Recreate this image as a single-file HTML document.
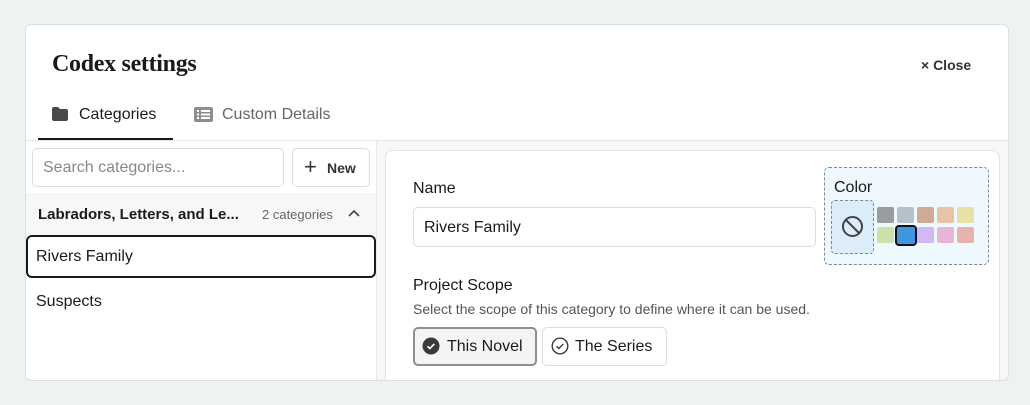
<!DOCTYPE html>
<html><head><style>
*{box-sizing:border-box;margin:0;padding:0}
body{width:1030px;height:405px;background:#eef3f2;font-family:"Liberation Sans",sans-serif;color:#1a1a1a;position:relative;overflow:hidden}
.a{position:absolute}
.card{left:25px;top:24px;width:984px;height:357px;background:#fff;border:1px solid #dcdfe0;border-radius:6px;overflow:hidden}
.in{position:absolute;left:-1px;top:-1px;width:984px;height:357px}
.t{font-size:15px;white-space:nowrap}
.sw{position:absolute;width:17px;height:16px;border-radius:2px}
</style></head><body>
<div class="a card"><div class="in">
  <div class="a" style="left:27px;top:27px;font-family:'Liberation Serif',serif;font-weight:bold;font-size:24px;letter-spacing:-0.3px">Codex settings</div>
  <div class="a t" style="left:896px;top:33px;font-size:14px;color:#333;font-weight:bold">× Close</div>
  <svg class="a" style="left:26px;top:82px" width="18" height="16" viewBox="0 0 18 16"><path d="M1 3a2 2 0 0 1 2-2h4l2 2h6a2 2 0 0 1 2 2v8a2 2 0 0 1-2 2H3a2 2 0 0 1-2-2z" fill="#4a4a4a"/></svg>
  <div class="a t" style="left:54px;top:82px;font-size:16px">Categories</div>
  <svg class="a" style="left:169px;top:83px" width="19" height="15" viewBox="0 0 19 15"><rect x="0" y="0" width="19" height="15" rx="2" fill="#8e8e8e"/><g fill="#fff"><rect x="3" y="3" width="2" height="2"/><rect x="7" y="3" width="9" height="2"/><rect x="3" y="6.5" width="2" height="2"/><rect x="7" y="6.5" width="9" height="2"/><rect x="3" y="10" width="2" height="2"/><rect x="7" y="10" width="9" height="2"/></g></svg>
  <div class="a t" style="left:197px;top:82px;font-size:16px;color:#666">Custom Details</div>
  <div class="a" style="left:13px;top:114px;width:135px;height:2px;background:#1a1a1a"></div>
  <div class="a" style="left:0;top:116px;width:984px;height:1px;background:#e6e6e6"></div>
  <div class="a" style="left:7px;top:124px;width:252px;height:39px;border:1px solid #ddd;border-radius:5px"></div>
  <div class="a t" style="left:18px;top:135px;color:#888;font-size:16px">Search categories...</div>
  <div class="a" style="left:267px;top:124px;width:78px;height:39px;border:1px solid #ddd;border-radius:5px"></div>
  <div class="a" style="left:279px;top:135px;font-size:22px;line-height:16px;color:#333;font-weight:300">+</div>
  <div class="a t" style="left:302px;top:136px;font-size:14px;font-weight:bold;color:#333">New</div>
  <div class="a" style="left:0;top:170px;width:351px;height:41px;background:#f7f7f7;border-top:1px solid #eee"></div>
  <div class="a t" style="left:13px;top:182px;font-weight:bold">Labradors, Letters, and Le...</div>
  <div class="a t" style="left:237px;top:183px;font-size:13px;color:#666">2 categories</div>
  <svg class="a" style="left:323px;top:185px" width="12" height="8" viewBox="0 0 12 8"><path d="M1 7l5-5 5 5" stroke="#444" stroke-width="1.6" fill="none"/></svg>
  <div class="a" style="left:1px;top:211px;width:350px;height:43px;border:2px solid #1a1a1a;border-radius:6px"></div>
  <div class="a t" style="left:11px;top:224px;font-size:16px">Rivers Family</div>
  <div class="a t" style="left:11px;top:269px;font-size:16px">Suspects</div>
  <div class="a" style="left:351px;top:117px;width:633px;height:241px;background:#f6f7f7;border-left:1px solid #e8e8e8"></div>
  <div class="a" style="left:360px;top:126px;width:615px;height:240px;background:#fff;border:1px solid #e4e4e4;border-radius:8px"></div>
  <div class="a t" style="left:388px;top:156px;font-size:16px">Name</div>
  <div class="a" style="left:388px;top:183px;width:403px;height:40px;border:1px solid #ddd;border-radius:5px"></div>
  <div class="a t" style="left:399px;top:195px;font-size:16px">Rivers Family</div>
  <div class="a t" style="left:388px;top:253px;font-size:16px">Project Scope</div>
  <div class="a t" style="left:388px;top:277px;font-size:14px;color:#555">Select the scope of this category to define where it can be used.</div>
  <div class="a" style="left:388px;top:303px;width:124px;height:39px;border:2px solid #8f8f8f;border-radius:5px;background:#f4f4f4"></div>
  <svg class="a" style="left:397px;top:313px" width="18" height="18" viewBox="0 0 18 18"><circle cx="9" cy="9" r="8.5" fill="#3a3a3a"/><path d="M5.5 9.3l2.3 2.2 4.5-4.5" stroke="#fff" stroke-width="1.6" fill="none"/></svg>
  <div class="a t" style="left:422px;top:314px;font-size:16px">This Novel</div>
  <div class="a" style="left:517px;top:303px;width:125px;height:39px;border:1px solid #ddd;border-radius:5px"></div>
  <svg class="a" style="left:526px;top:313px" width="18" height="18" viewBox="0 0 18 18"><circle cx="9" cy="9" r="7.8" fill="none" stroke="#3a3a3a" stroke-width="1.4"/><path d="M5.5 9.3l2.3 2.2 4.5-4.5" stroke="#3a3a3a" stroke-width="1.4" fill="none"/></svg>
  <div class="a t" style="left:550px;top:314px;font-size:16px">The Series</div>
  <div class="a" style="left:799px;top:143px;width:165px;height:98px;border:1.5px dashed #7a8a98;border-radius:5px;background:#eef8fd"></div>
  <div class="a t" style="left:809px;top:155px;font-size:16px">Color</div>
  <div class="a" style="left:806px;top:176px;width:43px;height:54px;border:1.5px dashed #7a8a98;border-radius:4px;background:#dcedfa"></div>
  <svg class="a" style="left:816px;top:191px" width="23" height="23" viewBox="0 0 23 23"><circle cx="11.5" cy="11.5" r="9.5" fill="none" stroke="#444" stroke-width="2"/><path d="M5 5l13 13" stroke="#444" stroke-width="2"/></svg>
  <div class="sw" style="left:852px;top:183px;background:#9a9d9e"></div>
  <div class="sw" style="left:872px;top:183px;background:#b5c0c8"></div>
  <div class="sw" style="left:892px;top:183px;background:#cdab96"></div>
  <div class="sw" style="left:912px;top:183px;background:#e9c3a6"></div>
  <div class="sw" style="left:932px;top:183px;background:#e8e0a8"></div>
  <div class="sw" style="left:852px;top:203px;background:#c9e2a9"></div>
  <div class="sw" style="left:870px;top:201px;width:22px;height:21px;background:#3d97e0;border:2.5px solid #111;border-radius:4px"></div>
  <div class="sw" style="left:892px;top:203px;background:#d2b9f5"></div>
  <div class="sw" style="left:912px;top:203px;background:#e5b6d7"></div>
  <div class="sw" style="left:932px;top:203px;background:#e7b3ae"></div>
</div></div>
</body></html>
